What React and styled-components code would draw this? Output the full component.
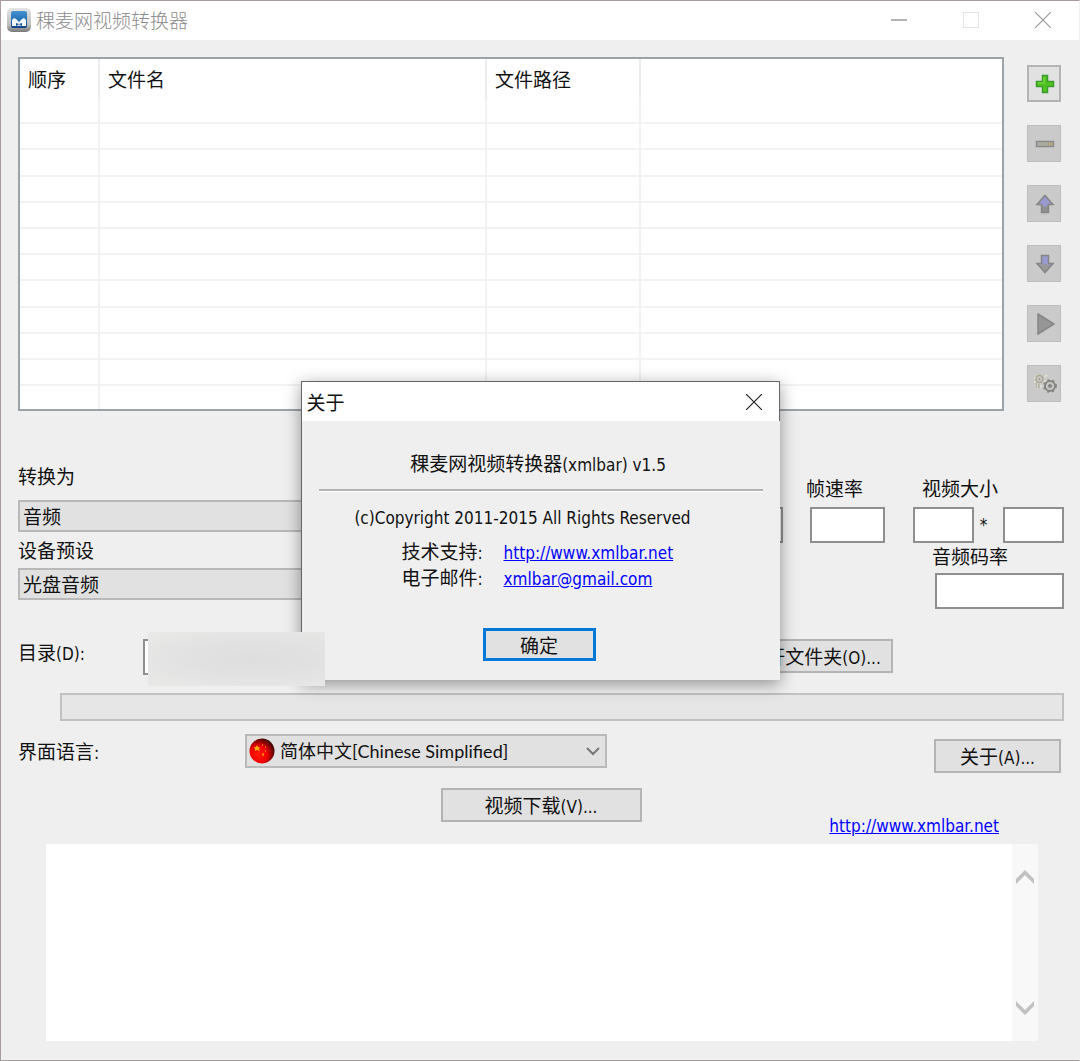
import React, { useState } from 'react';
import styled, { createGlobalStyle } from 'styled-components';

const GlobalStyle = createGlobalStyle`
  * {
    box-sizing: border-box;
  }
  body {
    margin: 0;
    background: #efefef;
    color: #111;
    font-family: "Noto Sans CJK SC", sans-serif;
    font-size: 19px;
    line-height: 24px;
  }
  svg {
    display: block;
  }
  button, input, select, textarea {
    font: inherit;
    color: inherit;
    border-radius: 0;
    margin: 0;
    padding: 0;
  }
`;

const Latin = styled.span`
  font-family: "DejaVu Sans Condensed", "Noto Sans", sans-serif;
  font-size: 17px;
  line-height: 18px;
`;

const Window = styled.div`
  position: relative;
  display: flex;
  flex-direction: column;
  min-height: 100vh;
  border: 1px solid #a79b9b;
  border-right-color: #efefef;
`;

const TitleBar = styled.header`
  display: flex;
  align-items: center;
  height: 39px;
  padding: 0 0 2px 5px;
  background: #fff;
  color: #8c8c8c;
`;

const Title = styled.h1`
  flex: 1;
  margin: 0 0 0 4px;
  font-size: 19px;
  font-weight: 300;
`;

const CaptionButton = styled.button`
  display: grid;
  place-items: center;
  width: 72px;
  height: 36px;
  border: none;
  background: none;
`;

const Body = styled.main`
  display: flex;
  flex-direction: column;
  flex: 1;
  padding: 17px 15px 19px 17px;
`;

const TopRow = styled.div`
  display: flex;
  gap: 23px;
  padding-right: 3px;
`;

const FileList = styled.div`
  flex: 1;
  height: 354px;
  overflow: hidden;
  background: #fff;
  border: 2px solid #9ba3a9;
`;

const FileTable = styled.table`
  width: 100%;
  table-layout: fixed;
  border-collapse: separate;
  border-spacing: 0;
`;

const HeadCell = styled.th`
  width: ${(p) => p.$width || 'auto'};
  height: 39px;
  padding: 0 0 0 8px;
  text-align: left;
  font-weight: 400;
  border-right: ${(p) => (p.$last ? 'none' : '2px solid #ececec')};
`;

const FileRow = styled.tr`
  height: 26px;
  &:nth-child(5n + 3) {
    height: 27px;
  }
`;

const Cell = styled.td`
  padding: 0;
  border-right: 2px solid #f2f2f2;
  border-bottom: 2px solid #f2f2f2;
  &:last-child {
    border-right: none;
  }
`;

const Tools = styled.div`
  display: flex;
  flex-direction: column;
  gap: 23px;
  padding-top: 8px;
`;

const ToolButton = styled.button`
  display: grid;
  place-items: center;
  width: 34px;
  height: 37px;
  padding-left: 2px;
  background: ${(p) => (p.disabled ? '#cacaca' : '#e1e1e1')};
  border: ${(p) => (p.disabled ? '1px solid #bdbdbd' : '2px solid #b4b4b4')};
`;

const Settings = styled.div`
  display: flex;
  justify-content: space-between;
`;

const Presets = styled.div`
  display: flex;
  flex-direction: column;
  gap: 6px;
  width: 560px;
  padding-top: 53px;
`;

const PresetLabel = styled.label`
  padding-bottom: ${(p) => (p.$first ? '6px' : '0')};
`;

const Select = styled.select`
  appearance: none;
  width: 100%;
  height: ${(p) => (p.$tall ? '34px' : '32px')};
  padding: 0 30px 0 ${(p) => (p.$tall ? '33px' : '3px')};
  background: #e1e1e1;
  border: 2px solid #b9b9b9;
  font-family: ${(p) => (p.$tall ? 'Lato, "Noto Sans CJK SC", sans-serif' : 'inherit')};
  font-size: ${(p) => (p.$tall ? '18px' : '19px')};
`;

const Fields = styled.div`
  display: flex;
  gap: 23px;
  padding-top: 65px;
`;

const Field = styled.div`
  display: flex;
  flex-direction: column;
  justify-content: ${(p) => (p.$end ? 'flex-end' : 'flex-start')};
  gap: 7px;
  width: 79px;
  height: 67px;
`;

const SizeField = styled.div`
  width: 156px;
  padding-left: 5px;
`;

const FieldLabel = styled.label`
  display: block;
  padding-left: ${(p) => p.$indent || '0'};
`;

const TextBox = styled.input`
  width: ${(p) => p.$width};
  height: 36px;
  padding: 0 4px;
  background: #fff;
  border: 2px solid #8f8f8f;
  align-self: flex-end;
`;

const SizeInputs = styled.div`
  display: flex;
  align-items: center;
  justify-content: space-between;
  padding: 7px 0 1px;
`;

const Times = styled(Latin)`
  padding-right: 10px;
`;

const BitrateInput = styled.div`
  display: flex;
  justify-content: flex-end;
  padding-top: 5px;
`;

const FolderRow = styled.div`
  display: flex;
  margin-top: 30px;
  padding-right: 171px;
`;

const RowLabel = styled.label`
  width: ${(p) => p.$width};
  padding-top: ${(p) => p.$top};
`;

const FolderBox = styled.div`
  position: relative;
  display: flex;
  flex: 1;
  margin-right: 20px;
`;

const Redaction = styled.div`
  position: absolute;
  z-index: 3;
  top: -7px;
  left: 5px;
  width: 177px;
  height: 54px;
  background: radial-gradient(ellipse at 60% 50%, #dedede 0%, #e1e1e1 40%, #e9e9e8 100%);
`;

const PushButton = styled.button`
  width: ${(p) => p.$width};
  height: 34px;
  background: #e1e1e1;
  border: 2px solid #b4b4b4;
  white-space: nowrap;
`;

const Progress = styled.progress`
  appearance: none;
  display: block;
  width: calc(100% - 42px);
  height: 28px;
  margin: 18px 0 0 42px;
  background: #e6e6e6;
  border: 2px solid #c1c1c1;
  &::-webkit-progress-bar {
    background: #e6e6e6;
  }
`;

const LanguageRow = styled.div`
  display: flex;
  align-items: flex-start;
  margin-top: 13px;
  padding-right: 3px;
`;

const LanguageBox = styled.div`
  position: relative;
  width: 362px;
  margin-right: auto;
`;

const FlagIcon = styled.svg`
  position: absolute;
  top: 4px;
  left: 4px;
`;

const Chevron = styled.svg`
  position: absolute;
  top: 13px;
  right: 6px;
`;

const AboutSlot = styled.div`
  padding-top: 5px;
`;

const DownloadRow = styled.div`
  display: grid;
  grid-template-columns: 1fr auto 1fr;
  align-items: start;
  margin-top: 15px;
`;

const SiteLink = styled.div`
  justify-self: end;
  padding: 24px 65px 0 0;
`;

const Link = styled.a`
  color: #00f;
  font-family: "DejaVu Sans Condensed", "Noto Sans", sans-serif;
  font-size: 17px;
  line-height: 18px;
  text-decoration: underline;
`;

const Log = styled.div`
  display: flex;
  flex: 1;
  min-height: 190px;
  margin: 8px 26px 0 28px;
  background: #fff;
`;

const LogText = styled.textarea`
  flex: 1;
  border: none;
  outline: none;
  resize: none;
  background: transparent;
`;

const ScrollBar = styled.div`
  display: flex;
  flex-direction: column;
  justify-content: space-between;
  width: 26px;
  padding: 26px 0;
  background: #f8f8f8;
`;

const ScrollButton = styled.button`
  display: grid;
  place-items: center;
  width: 26px;
  height: 14px;
  border: none;
  background: none;
`;

const Overlay = styled.div`
  position: absolute;
  z-index: 2;
  inset: 0;
  display: grid;
  place-items: center;
`;

const Dialog = styled.section`
  width: 479px;
  background: #efefef;
  border: 1px solid #666;
  border-width: 1px 0 0 1px;
  box-shadow: 0 4px 16px rgba(0, 0, 0, 0.4);
`;

const DialogBar = styled.div`
  display: flex;
  align-items: center;
  justify-content: space-between;
  height: 39px;
  padding-left: 5px;
  background: #fff;
  border-right: 1px solid #666;
`;

const DialogTitle = styled.h2`
  margin: 0;
  font-size: 19px;
  font-weight: 400;
`;

const DialogClose = styled.button`
  display: grid;
  place-items: center;
  width: 50px;
  height: 39px;
  border: none;
  background: none;
`;

const DialogBody = styled.div`
  display: flex;
  flex-direction: column;
  padding: 30px 17px 19px;
`;

const Line = styled.p`
  margin: 0;
  padding-right: ${(p) => p.$shift};
  text-align: center;
`;

const Rule = styled.hr`
  width: 100%;
  height: 3px;
  margin: 14px 0 12px;
  border: none;
  border-top: 2px solid #b2b2b2;
  border-bottom: 1px solid #fff;
`;

const Contacts = styled.dl`
  display: grid;
  grid-template-columns: 102px auto;
  margin: 10px 0 0 83px;
  line-height: 26px;
  dt, dd {
    height: 26px;
    margin: 0;
  }
`;

const OkButton = styled.button`
  align-self: center;
  width: 113px;
  height: 33px;
  margin: 38px 3px 0 0;
  background: #e1e1e1;
  border: 3px solid #0078d7;
`;

const columns = [
  { name: '顺序', width: '80px' },
  { name: '文件名', width: '387px' },
  { name: '文件路径', width: '154px' },
  { name: '' },
];

const rows = Array.from({ length: 12 }, (_, i) => i);

const AppIcon = () => (
  <svg width="26" height="26" viewBox="0 0 26 26">
    <defs>
      <linearGradient id="frame" x1="0" y1="0" x2="0" y2="1">
        <stop offset="0" stopColor="#e4e4e4" />
        <stop offset="0.7" stopColor="#bdbdbd" />
        <stop offset="1" stopColor="#777" />
      </linearGradient>
      <linearGradient id="face" x1="0" y1="0" x2="0" y2="1">
        <stop offset="0" stopColor="#4593cf" />
        <stop offset="0.5" stopColor="#2672b8" />
        <stop offset="1" stopColor="#123f83" />
      </linearGradient>
    </defs>
    <rect x="1" y="1" width="24" height="24" rx="5" fill="url(#frame)" />
    <rect x="5" y="4" width="16" height="17" rx="2" fill="url(#face)" />
    <path d="M6 19v-6l2-2 2 1 3 3 3-3 2-1 2 2v6h-4v-3l-3 1-3-1v3z" fill="#f3f8fd" />
    <path d="M10 19l3-2 3 2z" fill="#bcd6ee" />
  </svg>
);

const CloseIcon = ({ color }) => (
  <svg width="16" height="16" viewBox="0 0 16 16">
    <path d="M0 0L16 16M16 0L0 16" stroke={color} strokeWidth="1.2" fill="none" />
  </svg>
);

const PlusIcon = () => (
  <svg width="20" height="20" viewBox="0 0 20 20">
    <path d="M7.500 1.500h5v6h6v5h-6v6h-5v-6h-6v-5h6z" fill="#4fc31f" stroke="#3d9a2e" strokeWidth="1.500" />
    <path d="M9 3v6H3" stroke="#7ee04c" fill="none" />
  </svg>
);

const MinusIcon = () => (
  <svg width="20" height="20" viewBox="0 0 20 20">
    <rect x="1.500" y="7.500" width="17" height="5" fill="#adada2" stroke="#8a8a8a" strokeWidth="1.500" />
    <path d="M12 10h6" stroke="#b0a878" strokeWidth="2" />
  </svg>
);

const ArrowIcon = ({ down }) => (
  <svg width="20" height="20" viewBox="0 0 20 20">
    <g transform={down ? 'rotate(180 10 10)' : undefined}>
      <path d="M10 1.500L18 10.500H13.500V18.500H6.500V10.500H2z" fill={down ? '#9a9ad0' : '#909090'} />
      {down ? (
        <path d="M10 2L16 9l-6 1-6-1z" fill="#989898" />
      ) : (
        <path d="M10 2L17 10l-4 1-3 2-3-2-4-1z" fill="#9a9ad0" />
      )}
      <path d="M10 1.500L18 10.500H13.500V18.500H6.500V10.500H2z" fill="none" stroke="#858585" strokeWidth="1.500" />
    </g>
  </svg>
);

const PlayIcon = () => (
  <svg width="20" height="22" viewBox="0 0 20 22">
    <path d="M3 1L19 11L3 21z" fill="#969696" stroke="#858585" strokeWidth="1.500" />
  </svg>
);

const GearsIcon = () => (
  <svg width="24" height="20" viewBox="0 0 24 20">
    <path d="M1 4h3M1 8h2M3 12l2-1M8 11v3M12 3l2-2M4 1l1 2M13 8l-2-1" stroke="#e8e5d5" strokeWidth="1.500" />
    <circle cx="6.500" cy="5" r="3.500" fill="none" stroke="#aaa58f" strokeWidth="1.500" />
    <circle cx="6.500" cy="5" r="1" fill="#99958a" />
    <path d="M3 9l1 2-1 2M6 10v4" stroke="#aaa58f" fill="none" />
    <circle cx="17" cy="12" r="6" fill="none" stroke="#8c8c84" strokeWidth="2" strokeDasharray="2 3" />
    <circle cx="17" cy="12" r="5" fill="#c6c6c6" stroke="#858580" strokeWidth="2" />
    <circle cx="17" cy="12" r="2" fill="#858585" />
  </svg>
);

const Flag = () => (
  <FlagIcon width="26" height="26" viewBox="0 0 26 26">
    <defs>
      <radialGradient id="ball" cx="0.35" cy="0.65" r="0.7">
        <stop offset="0" stopColor="#ff1a08" />
        <stop offset="0.5" stopColor="#f20000" />
        <stop offset="1" stopColor="#3a0000" />
      </radialGradient>
    </defs>
    <circle cx="13" cy="13" r="12.500" fill="url(#ball)" />
    <path d="M8 7l1 2h2l-1 2 1 2-3-1-2 1v-2l-1-2h2z" fill="#ffb000" />
    <path d="M13 6h1v2h-1zM16 8h1v2h-1zM16 12h1v2h-1zM13 15h2v3h-2z" fill="#f07000" />
  </FlagIcon>
);

const ScrollArrow = ({ down }) => (
  <svg width="18" height="14" viewBox="0 0 18 14">
    <path d={down ? 'M0 0l9 9 9-9v5l-9 9-9-9z' : 'M0 14l9-9 9 9V9L9 0 0 9z'} fill="#c1c1c1" />
  </svg>
);

const AboutDialog = ({ onClose }) => (
  <Overlay>
    <Dialog role="dialog" aria-labelledby="about-title">
      <DialogBar>
        <DialogTitle id="about-title">关于</DialogTitle>
        <DialogClose aria-label="关闭" onClick={onClose}>
          <CloseIcon color="#222" />
        </DialogClose>
      </DialogBar>
      <DialogBody>
        <Line $shift="5px">稞麦网视频转换器<Latin>(xmlbar) v1.5</Latin></Line>
        <Rule />
        <Line $shift="36px"><Latin>(c)Copyright 2011-2015 All Rights Reserved</Latin></Line>
        <Contacts>
          <dt>技术支持<Latin>:</Latin></dt>
          <dd><Link href="http://www.xmlbar.net">http://www.xmlbar.net</Link></dd>
          <dt>电子邮件<Latin>:</Latin></dt>
          <dd><Link href="mailto:xmlbar@gmail.com">xmlbar@gmail.com</Link></dd>
        </Contacts>
        <OkButton onClick={onClose}>确定</OkButton>
      </DialogBody>
    </Dialog>
  </Overlay>
);

export default function App() {
  const [about, setAbout] = useState(true);

  return (
    <Window>
      <GlobalStyle />
      <TitleBar>
        <AppIcon />
        <Title>稞麦网视频转换器</Title>
        <CaptionButton aria-label="最小化">
          <svg width="16" height="2"><path d="M0 1h16" stroke="#999" strokeWidth="1.500" /></svg>
        </CaptionButton>
        <CaptionButton aria-label="最大化" disabled>
          <svg width="16" height="16"><rect x="0.500" y="0.500" width="15" height="15" fill="none" stroke="#e4e4e4" /></svg>
        </CaptionButton>
        <CaptionButton aria-label="关闭">
          <CloseIcon color="#999" />
        </CaptionButton>
      </TitleBar>

      <Body>
        <TopRow>
          <FileList>
            <FileTable>
              <thead>
                <tr>
                  {columns.map((c, i) => (
                    <HeadCell key={i} $width={c.width} $last={!c.width}>{c.name}</HeadCell>
                  ))}
                </tr>
              </thead>
              <tbody>
                {rows.map((r) => (
                  <FileRow key={r}>
                    {columns.map((c, i) => <Cell key={i} />)}
                  </FileRow>
                ))}
              </tbody>
            </FileTable>
          </FileList>
          <Tools>
            <ToolButton aria-label="添加"><PlusIcon /></ToolButton>
            <ToolButton aria-label="删除" disabled><MinusIcon /></ToolButton>
            <ToolButton aria-label="上移" disabled><ArrowIcon /></ToolButton>
            <ToolButton aria-label="下移" disabled><ArrowIcon down /></ToolButton>
            <ToolButton aria-label="播放" disabled><PlayIcon /></ToolButton>
            <ToolButton aria-label="转换" disabled><GearsIcon /></ToolButton>
          </Tools>
        </TopRow>

        <Settings>
          <Presets>
            <PresetLabel htmlFor="target" $first>转换为</PresetLabel>
            <Select id="target"><option>音频</option></Select>
            <PresetLabel htmlFor="device">设备预设</PresetLabel>
            <Select id="device"><option>光盘音频</option></Select>
          </Presets>
          <Fields>
            <Field $end>
              <TextBox aria-label="视频码率" $width="74px" />
            </Field>
            <Field>
              <FieldLabel htmlFor="fps">帧速率</FieldLabel>
              <TextBox id="fps" $width="75px" />
            </Field>
            <SizeField>
              <FieldLabel htmlFor="width" $indent="9px">视频大小</FieldLabel>
              <SizeInputs>
                <TextBox id="width" $width="61px" />
                <Times>*</Times>
                <TextBox aria-label="高度" $width="61px" />
              </SizeInputs>
              <FieldLabel htmlFor="bitrate" $indent="19px">音频码率</FieldLabel>
              <BitrateInput>
                <TextBox id="bitrate" $width="129px" />
              </BitrateInput>
            </SizeField>
          </Fields>
        </Settings>

        <FolderRow>
          <RowLabel htmlFor="folder" $width="125px" $top="1px">目录<Latin>(D):</Latin></RowLabel>
          <FolderBox>
            <TextBox id="folder" $width="100%" />
            <Redaction />
          </FolderBox>
          <PushButton $width="158px">打开文件夹<Latin>(O)...</Latin></PushButton>
        </FolderRow>

        <Progress value={0} max={100} aria-label="进度" />

        <LanguageRow>
          <RowLabel htmlFor="language" $width="227px" $top="5px">界面语言<Latin>:</Latin></RowLabel>
          <LanguageBox>
            <Select id="language" $tall>
              <option>简体中文[Chinese Simplified]</option>
            </Select>
            <Flag />
            <Chevron width="16" height="10" viewBox="0 0 16 10">
              <path d="M2 1l6 6 6-6" stroke="#777" strokeWidth="2" fill="none" />
            </Chevron>
          </LanguageBox>
          <AboutSlot>
            <PushButton $width="127px" onClick={() => setAbout(true)}>关于<Latin>(A)...</Latin></PushButton>
          </AboutSlot>
        </LanguageRow>

        <DownloadRow>
          <span />
          <PushButton $width="201px">视频下载<Latin>(V)...</Latin></PushButton>
          <SiteLink><Link href="http://www.xmlbar.net">http://www.xmlbar.net</Link></SiteLink>
        </DownloadRow>

        <Log>
          <LogText aria-label="日志" readOnly />
          <ScrollBar>
            <ScrollButton aria-label="向上滚动"><ScrollArrow /></ScrollButton>
            <ScrollButton aria-label="向下滚动"><ScrollArrow down /></ScrollButton>
          </ScrollBar>
        </Log>
      </Body>

      {about && <AboutDialog onClose={() => setAbout(false)} />}
    </Window>
  );
}
